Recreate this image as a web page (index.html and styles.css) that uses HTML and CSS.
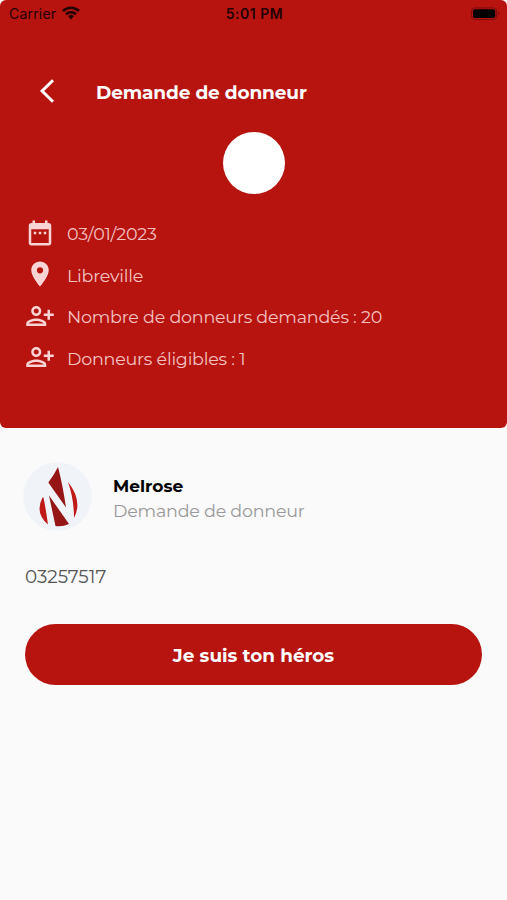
FILE: index.html
```html
<!DOCTYPE html>
<html lang="fr">
<head>
<meta charset="utf-8">
<title>Demande de donneur</title>
<link rel="stylesheet" href="styles.css">
</head>
<body>
<header class="hero">
  <div class="status">
    <div class="carrier"><span>Carrier</span>
      <svg width="18" height="14" viewBox="0 0 18 14" fill="none" stroke="#210303" stroke-width="2.6"><path d="M1 5a11.5 11.5 0 0 1 16 0M4 8.2a7.2 7.2 0 0 1 10 0"/><path d="M6.2 10.2a4 4 0 0 1 5.6 0L9 13.4z" fill="#210303" stroke="none"/></svg>
    </div>
    <div class="time">5:01 PM</div>
    <svg class="battery" width="30" height="14" viewBox="0 0 30 14"><rect x=".6" y=".9" width="25" height="11.6" rx="3" fill="none" stroke="#7d0c0b"/><rect x="2" y="2.3" width="22.2" height="8.8" rx="1.8" fill="#000"/><path d="M27 4.6q2.6 2 0 4z" fill="#7d0c0b"/></svg>
  </div>
  <div class="bar">
    <svg width="18" height="26" viewBox="0 0 18 26" fill="none" stroke="#fff" stroke-width="3"><path d="M15 2.2 4.1 13 15 23.8"/></svg>
    <h1>Demande de donneur</h1>
  </div>
  <div class="blood"></div>
  <ul class="facts">
    <li><svg viewBox="0 0 24 24"><path d="M9 11H7v2h2v-2zm4 0h-2v2h2v-2zm4 0h-2v2h2v-2zm2-7h-1V2h-2v2H8V2H6v2H5c-1.11 0-1.99.9-1.99 2L3 20c0 1.1.89 2 2 2h14c1.1 0 2-.9 2-2V6c0-1.1-.9-2-2-2zm0 16H5V9h14v11z"/></svg><span>03/01/2023</span></li>
    <li><svg viewBox="0 0 24 24"><path d="M12 2C8.13 2 5 5.13 5 9c0 5.25 7 13 7 13s7-7.75 7-13c0-3.87-3.13-7-7-7zm0 9.5a2.5 2.5 0 0 1 0-5 2.5 2.5 0 0 1 0 5z"/></svg><span>Libreville</span></li>
    <li><svg viewBox="0 0 24 24"><path d="M13 8c0-2.21-1.79-4-4-4S5 5.79 5 8s1.79 4 4 4 4-1.79 4-4zm-2 0c0 1.1-.9 2-2 2s-2-.9-2-2 .9-2 2-2 2 .9 2 2zM1 18v2h16v-2c0-2.66-5.33-4-8-4s-8 1.34-8 4zm2 0c.2-.71 3.3-2 6-2 2.69 0 5.77 1.28 6 2H3zm17-3v-3h3v-2h-3V7h-2v3h-3v2h3v3h2z"/></svg><span>Nombre de donneurs demandés : 20</span></li>
    <li><svg viewBox="0 0 24 24"><path d="M13 8c0-2.21-1.79-4-4-4S5 5.79 5 8s1.79 4 4 4 4-1.79 4-4zm-2 0c0 1.1-.9 2-2 2s-2-.9-2-2 .9-2 2-2 2 .9 2 2zM1 18v2h16v-2c0-2.66-5.33-4-8-4s-8 1.34-8 4zm2 0c.2-.71 3.3-2 6-2 2.69 0 5.77 1.28 6 2H3zm17-3v-3h3v-2h-3V7h-2v3h-3v2h3v3h2z"/></svg><span>Donneurs éligibles : 1</span></li>
  </ul>
</header>
<main>
  <section class="person">
    <svg class="avatar" viewBox="0 0 70 70"><circle cx="35.500" cy="34.500" r="34.300" fill="#f0f3f8"/><path d="M36 5Q32 13 26.300 20.500L44 45.500Q40.500 22 36 5zM27 33.500 47 62Q40 65 33.500 64z" fill="#961615"/><path d="M46 20Q61 39 52 56Q52 37 46 20zM20.500 35.500Q12.500 51 26 62.500Q24 48 21.500 35.500z" fill="#c01a18"/></svg>
    <div class="who"><h2>Melrose</h2><p>Demande de donneur</p></div>
  </section>
  <p class="phone">03257517</p>
  <button class="cta">Je suis ton héros</button>
</main>
</body>
</html>
```
FILE: styles.css
```css
* { box-sizing: border-box; }
body { margin: 0; min-height: 900px; background: #fafafa; font-family: Montserrat, Inter, sans-serif; font-size: 17.5px; }
h1, h2, p, ul { margin: 0; padding: 0; }
svg { display: block; flex: none; }
.hero { height: 428px; background: #b71410; border-radius: 6px; }
.status { height: 27px; display: grid; grid-template-columns: 1fr auto 1fr; align-items: center; padding: 0 6px 0 9px; font-family: Inter, sans-serif; font-size: 14px; color: #210303; }
.carrier { display: flex; align-items: center; gap: 6px; letter-spacing: .2px; }
.carrier svg { margin-top: -2px; }
.time { font-weight: 600; letter-spacing: .5px; margin-left: -1px; }
.battery { justify-self: end; }
.bar { display: flex; align-items: center; height: 50px; margin-top: 40px; padding-left: 38px; color: #fff; }
.bar svg { margin-top: -2px; }
h1 { margin: 1px 0 0 40px; font-size: 18.5px; font-weight: 700; line-height: 24px; letter-spacing: -.12px; }
.blood { width: 62px; height: 62px; margin: 15px auto 0; border-radius: 50%; background: #fff; }
.facts { list-style: none; margin-top: 18px; padding-left: 25px; color: #f2c2c1; letter-spacing: -.22px; }
.facts li { display: flex; align-items: center; height: 41.5px; gap: 12px; }
.facts span { padding-top: 1.6px; }
.facts svg { width: 30px; height: 30px; fill: #f9d4d4; }
main { padding: 34px 25px 0 22px; }
.person { display: flex; align-items: center; gap: 21px; }
.avatar { width: 70px; height: 70px; }
.who { padding-top: 2px; }
h2 { font-size: 17px; line-height: 24px; font-weight: 700; color: #000; }
.who p { font-size: 17.5px; line-height: 25px; color: #999; letter-spacing: -.22px; }
.phone { margin: 33px 0 0 3px; font-size: 18.4px; line-height: 24px; color: #555; }
.cta { display: flex; align-items: center; justify-content: center; width: calc(100% - 3px); height: 61px; margin: 35px 0 0 3px; padding: 2px 0 0; border: 0; border-radius: 31px; background: #b71410; color: #fff; font: 700 18.4px Montserrat, Inter, sans-serif; }
```
